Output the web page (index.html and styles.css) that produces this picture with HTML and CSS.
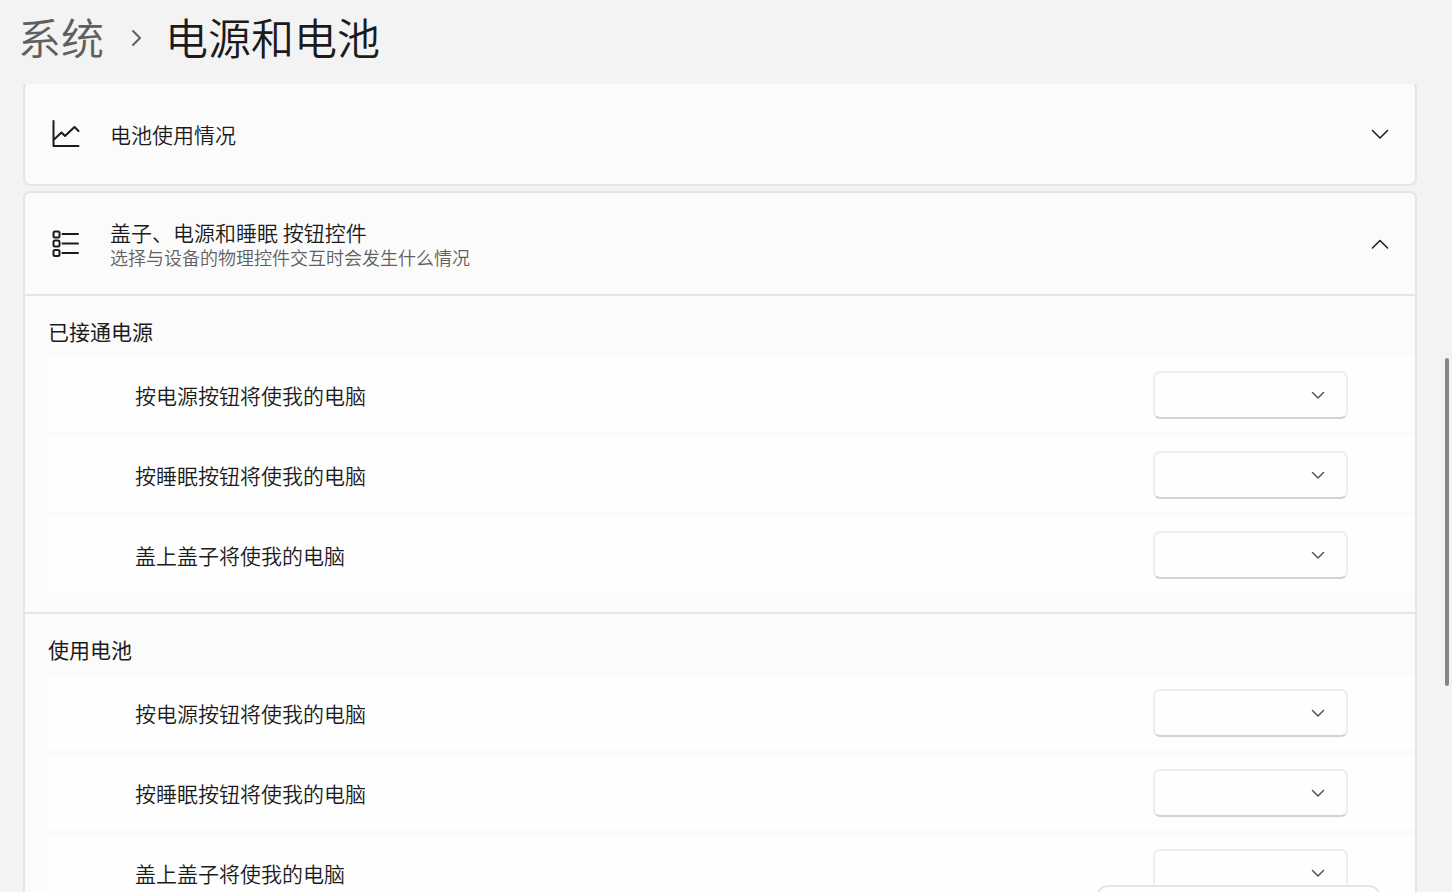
FILE: index.html
```html
<!DOCTYPE html>
<html lang="zh-CN">
<head>
<meta charset="utf-8">
<meta name="viewport" content="width=device-width, initial-scale=1">
<title>电源和电池</title>
<link rel="stylesheet" href="styles.css">
</head>
<body>
<div class="window">
  <header class="header">
    <a class="crumb" href="#">系统</a>
    <svg class="crumb-sep" viewBox="0 0 12 18" aria-hidden="true"><path d="M2 2l7 7-7 7"/></svg>
    <h1 class="title">电源和电池</h1>
  </header>

  <main class="content">
    <section class="card card-usage">
      <button class="expander" type="button" aria-expanded="false">
        <svg class="icon" viewBox="0 0 28 28" aria-hidden="true"><path d="M1.500 1v25H26.500M2 19.500l7.500-7 3.500 3.500 9.500-9 4 4"/></svg>
        <span class="labels"><span class="name">电池使用情况</span></span>
        <svg class="chevron" viewBox="0 0 18 10" aria-hidden="true"><path d="M1.500 1.500l7.500 7.500 7.500-7.500"/></svg>
      </button>
    </section>

    <section class="card">
      <button class="expander" type="button" aria-expanded="true">
        <svg class="icon" viewBox="0 0 28 28" aria-hidden="true"><rect x="1.500" y="1.500" width="6" height="6" rx="1.500"/><rect x="1.500" y="10.500" width="6" height="6" rx="1.500"/><rect x="1.500" y="20" width="6" height="6" rx="1.500"/><path d="M10.500 4h15.500M10.500 13.500h15.500M10.500 23h15.500"/></svg>
        <span class="labels">
          <span class="name">盖子、电源和睡眠 按钮控件</span>
          <span class="description">选择与设备的物理控件交互时会发生什么情况</span>
        </span>
        <svg class="chevron" viewBox="0 0 18 10" aria-hidden="true"><path d="M1.500 9l7.500-7.500 7.500 7.500"/></svg>
      </button>

      <div class="group">
        <h2 class="group-title">已接通电源</h2>
        <div class="rows">
          <div class="row">
            <label for="ac-power">按电源按钮将使我的电脑</label>
            <div class="combo"><select id="ac-power"><option></option></select><svg viewBox="0 0 14 8" aria-hidden="true"><path d="M1.500 1.500l5.500 5.500 5.500-5.500"/></svg></div>
          </div>
          <div class="row">
            <label for="ac-sleep">按睡眠按钮将使我的电脑</label>
            <div class="combo"><select id="ac-sleep"><option></option></select><svg viewBox="0 0 14 8" aria-hidden="true"><path d="M1.500 1.500l5.500 5.500 5.500-5.500"/></svg></div>
          </div>
          <div class="row">
            <label for="ac-lid">盖上盖子将使我的电脑</label>
            <div class="combo"><select id="ac-lid"><option></option></select><svg viewBox="0 0 14 8" aria-hidden="true"><path d="M1.500 1.500l5.500 5.500 5.500-5.500"/></svg></div>
          </div>
        </div>
      </div>

      <div class="group">
        <h2 class="group-title">使用电池</h2>
        <div class="rows">
          <div class="row">
            <label for="dc-power">按电源按钮将使我的电脑</label>
            <div class="combo"><select id="dc-power"><option></option></select><svg viewBox="0 0 14 8" aria-hidden="true"><path d="M1.500 1.500l5.500 5.500 5.500-5.500"/></svg></div>
          </div>
          <div class="row">
            <label for="dc-sleep">按睡眠按钮将使我的电脑</label>
            <div class="combo"><select id="dc-sleep"><option></option></select><svg viewBox="0 0 14 8" aria-hidden="true"><path d="M1.500 1.500l5.500 5.500 5.500-5.500"/></svg></div>
          </div>
          <div class="row">
            <label for="dc-lid">盖上盖子将使我的电脑</label>
            <div class="combo"><select id="dc-lid"><option></option></select><svg viewBox="0 0 14 8" aria-hidden="true"><path d="M1.500 1.500l5.500 5.500 5.500-5.500"/></svg></div>
          </div>
        </div>
      </div>
    </section>
  </main>

  <div class="scroll-thumb"></div>
  <div class="popup"></div>
</div>
</body>
</html>
```
FILE: styles.css
```css
* {
  box-sizing: border-box;
}

body {
  margin: 0;
  background: #f3f3f3;
  color: #1b1b1b;
  font-family: "Noto Sans CJK SC", sans-serif;
  font-size: 21px;
  font-weight: 350;
}

.window {
  position: relative;
  display: flex;
  flex-direction: column;
  height: 100vh;
  overflow: hidden;
}

svg {
  fill: none;
  stroke: currentColor;
  stroke-width: 2;
  stroke-linecap: round;
  stroke-linejoin: round;
}

.header {
  display: flex;
  flex: none;
  align-items: center;
  height: 84px;
  padding: 0 18px 12px;
  font-size: 43px;
  line-height: 60px;
}

.crumb {
  color: #5f5f5f;
  text-decoration: none;
}

.crumb-sep {
  width: 12px;
  height: 18px;
  margin: 4px 22px 0 27px;
  color: #5f5f5f;
}

.title {
  margin: 0;
  font-size: inherit;
  font-weight: 350;
}

.content {
  flex: 1;
  min-height: 0;
  padding: 0 35px 0 23px;
  overflow: hidden;
}

.card {
  border: 2px solid #e5e5e5;
  border-radius: 7px;
  background: #fbfbfb;
}

/* The list is scrolled so that the top border is out of view. */
.card-usage {
  margin: -3px 0 5px;
}

.expander {
  display: flex;
  align-items: center;
  width: 100%;
  min-height: 101px;
  padding: 0 26px 0 27px;
  border: 0;
  background: none;
  color: inherit;
  font: inherit;
  text-align: left;
}

.icon {
  flex: none;
  width: 28px;
  height: 28px;
  margin-right: 30px;
}

.labels {
  display: flex;
  flex: 1;
  flex-direction: column;
}

.name {
  line-height: 26px;
}

.description {
  color: #5f5f5f;
  font-size: 18px;
  line-height: 24px;
}

.chevron {
  flex: none;
  width: 18px;
  height: 10px;
  stroke-width: 1.5;
}

.group {
  padding: 19px 0 20px 23px;
  border-top: 2px solid #e5e5e5;
}

.group-title {
  margin: 0 0 10px;
  font-size: 21px;
  font-weight: 400;
  line-height: 32px;
}

.rows {
  display: grid;
  gap: 5px;
}

.row {
  display: flex;
  align-items: center;
  justify-content: space-between;
  height: 75px;
  padding: 0 67px 0 87px;
  background: #fefefe;
}

.combo {
  display: grid;
  align-items: center;
  width: 195px;
}

.combo > * {
  grid-area: 1 / 1;
}

.combo select {
  width: 100%;
  height: 48px;
  border: 2px solid #ededed;
  border-bottom-color: #d2d2d2;
  border-radius: 7px;
  background: #fefefe;
  font: inherit;
  appearance: none;
}

.combo svg {
  justify-self: end;
  width: 14px;
  height: 8px;
  margin-right: 23px;
  color: #555;
  stroke-width: 1.5;
  pointer-events: none;
}

.scroll-thumb {
  position: absolute;
  top: 358px;
  right: 3px;
  width: 4px;
  height: 328px;
  border-radius: 2px;
  background: #868686;
}

.popup {
  position: absolute;
  right: 71px;
  bottom: -20px;
  width: 285px;
  height: 27px;
  border: 2px solid #e5e5e5;
  border-radius: 12px;
  background: #fefefe;
}
```
